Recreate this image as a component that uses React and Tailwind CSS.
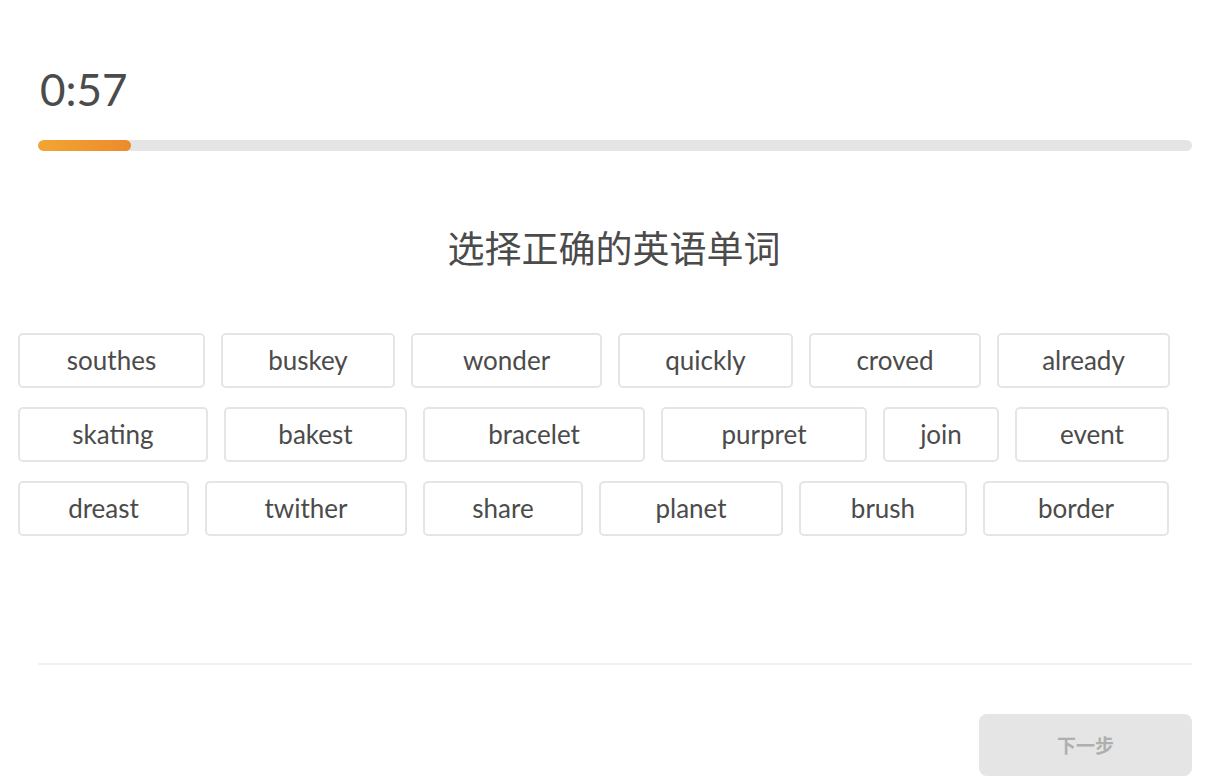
import React from "react";

const rows = [
  [
    ["southes", 187],
    ["buskey", 174],
    ["wonder", 191],
    ["quickly", 175],
    ["croved", 172],
    ["already", 173],
  ],
  [
    ["skating", 190],
    ["bakest", 183],
    ["bracelet", 222],
    ["purpret", 206],
    ["join", 116],
    ["event", 154],
  ],
  [
    ["dreast", 171],
    ["twither", 202],
    ["share", 160],
    ["planet", 184],
    ["brush", 168],
    ["border", 186],
  ],
];

export default function App() {
  return (
    <div
      className="w-full h-[784px] bg-white overflow-hidden flex flex-col"
      style={{ fontFamily: 'Lato, "Noto Sans CJK SC", sans-serif' }}
    >
      <div className="pl-[38px] pr-[26px] pt-[63px]">
        <div className="text-[44px] leading-[52px] text-[#4b4b4b] pl-[2px]">0:57</div>
        <div className="mt-[25px] h-[11px] w-full rounded-full bg-[#e5e5e5] overflow-hidden">
          <div className="h-full w-[93px] rounded-full bg-gradient-to-r from-[#f3a533] to-[#ec8a2c]"></div>
        </div>
      </div>

      <div
        className="mt-[74px] text-center text-[37px] leading-[44px] text-[#4b4b4b] pl-[10px]"
        style={{ fontFamily: '"Noto Sans CJK SC", sans-serif' }}
      >
        选择正确的英语单词
      </div>

      <div className="mt-[64px] pl-[18px] flex flex-col gap-[19px]">
        {rows.map((row, i) => (
          <div key={i} className="flex gap-[16px]">
            {row.map(([w, width]) => (
              <div
                key={w}
                className="h-[55px] flex items-center justify-center rounded-[5px] border-2 border-[#e5e5e5] text-[26px] text-[#4b4b4b]"
                style={{ width }}
              >
                {w}
              </div>
            ))}
          </div>
        ))}
      </div>

      <div className="mt-auto pl-[38px] pr-[26px]">
        <div className="h-[2px] bg-[#f0f0f0]"></div>
        <div className="flex justify-end pt-[49px] pb-[8px]">
          <div
            className="w-[213px] h-[62px] rounded-[8px] bg-[#e5e5e5] flex items-center justify-center text-[19px] font-bold text-[#afafaf]"
            style={{ fontFamily: '"Noto Sans CJK SC", sans-serif' }}
          >
            下一步
          </div>
        </div>
      </div>
    </div>
  );
}
